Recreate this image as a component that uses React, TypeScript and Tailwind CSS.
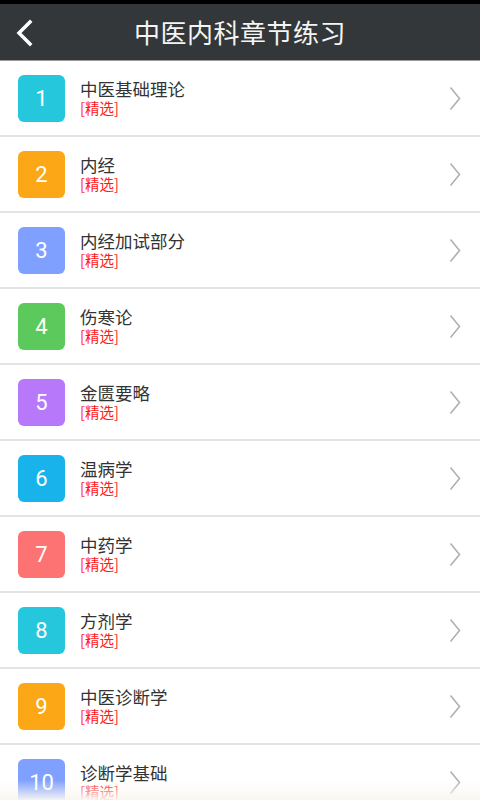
import React from "react";

const items = [
  { n: 1, t: "中医基础理论", c: "bg-[#24c7db]" },
  { n: 2, t: "内经", c: "bg-[#fba716]" },
  { n: 3, t: "内经加试部分", c: "bg-[#7fa0ff]" },
  { n: 4, t: "伤寒论", c: "bg-[#5cc95d]" },
  { n: 5, t: "金匮要略", c: "bg-[#b778f9]" },
  { n: 6, t: "温病学", c: "bg-[#17b3ea]" },
  { n: 7, t: "中药学", c: "bg-[#fd7373]" },
  { n: 8, t: "方剂学", c: "bg-[#24c7db]" },
  { n: 9, t: "中医诊断学", c: "bg-[#fba716]" },
  { n: 10, t: "诊断学基础", c: "bg-[#7fa0ff]" },
];

const font = { fontFamily: '"Noto Sans CJK SC", "Noto Sans", sans-serif' };

export default function App() {
  return (
    <div className="relative w-[480px] h-[800px] overflow-hidden bg-white" style={font}>
      <div className="h-[4px] bg-black" />
      <div className="relative h-[57px] bg-[#33373a] flex items-center justify-center border-b border-[#9a9a9a]">
        <svg className="absolute left-[14px] top-[15px]" width="20" height="28" viewBox="0 0 20 28">
          <path d="M16 3 L5 14 L16 25" fill="none" stroke="#ffffff" strokeWidth="3.5" strokeLinecap="square" />
        </svg>
        <span className="text-[#f4f4f4] text-[26px] leading-none tracking-[0.5px]">中医内科章节练习</span>
      </div>
      <div>
        {items.map((it) => (
          <div key={it.n} className="h-[76px] flex items-center border-b-2 border-[#e3e3e3] pl-[18px] pr-[19px]">
            <div className={`w-[47px] h-[47px] rounded-[6px] ${it.c} flex items-center justify-center text-white text-[22px]`} style={{ fontFamily: '"Roboto", sans-serif' }}>
              {it.n}
            </div>
            <div className="ml-[15px] flex flex-col flex-1 -mt-[1px]">
              <span className="text-[17.5px] leading-[20px] text-[#333333]">{it.t}</span>
              <span className="text-[14.5px] leading-[17px] text-[#ff1a1a]">[精选]</span>
            </div>
            <svg width="12" height="25" viewBox="0 0 12 25">
              <path d="M1.5 1.5 L10.5 12.5 L1.5 23.5" fill="none" stroke="#b0b0b0" strokeWidth="1.6" />
            </svg>
          </div>
        ))}
      </div>
      <div className="absolute left-0 right-0 bottom-0 h-[20px] bg-gradient-to-b from-[rgba(250,248,244,0)] to-[rgba(250,247,242,0.95)]" />
    </div>
  );
}
